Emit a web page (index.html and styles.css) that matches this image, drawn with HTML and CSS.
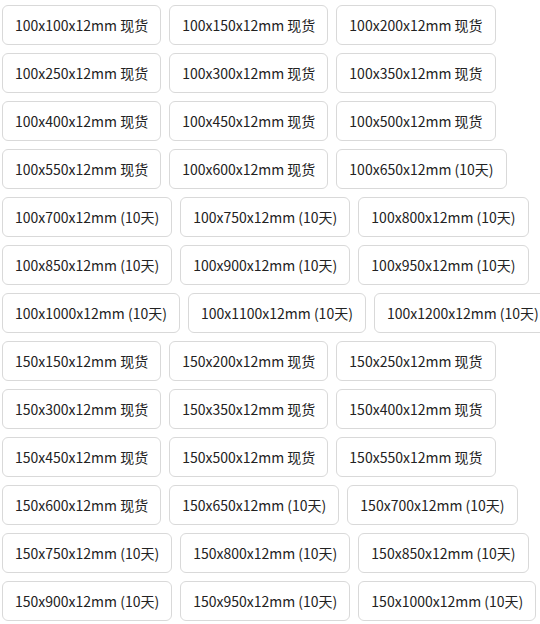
FILE: index.html
```html
<!DOCTYPE html>
<html lang="zh">
<head>
<meta charset="utf-8">
<link rel="stylesheet" href="styles.css">
</head>
<body>
<div class="sizes">
<span class="chip">100x100x12mm 现货</span>
<span class="chip">100x150x12mm 现货</span>
<span class="chip">100x200x12mm 现货</span>
<span class="chip">100x250x12mm 现货</span>
<span class="chip">100x300x12mm 现货</span>
<span class="chip">100x350x12mm 现货</span>
<span class="chip">100x400x12mm 现货</span>
<span class="chip">100x450x12mm 现货</span>
<span class="chip">100x500x12mm 现货</span>
<span class="chip">100x550x12mm 现货</span>
<span class="chip">100x600x12mm 现货</span>
<span class="chip">100x650x12mm (10天)</span>
<span class="chip">100x700x12mm (10天)</span>
<span class="chip">100x750x12mm (10天)</span>
<span class="chip">100x800x12mm (10天)</span>
<span class="chip">100x850x12mm (10天)</span>
<span class="chip">100x900x12mm (10天)</span>
<span class="chip">100x950x12mm (10天)</span>
<span class="chip">100x1000x12mm (10天)</span>
<span class="chip">100x1100x12mm (10天)</span>
<span class="chip">100x1200x12mm (10天)</span>
<span class="chip">150x150x12mm 现货</span>
<span class="chip">150x200x12mm 现货</span>
<span class="chip">150x250x12mm 现货</span>
<span class="chip">150x300x12mm 现货</span>
<span class="chip">150x350x12mm 现货</span>
<span class="chip">150x400x12mm 现货</span>
<span class="chip">150x450x12mm 现货</span>
<span class="chip">150x500x12mm 现货</span>
<span class="chip">150x550x12mm 现货</span>
<span class="chip">150x600x12mm 现货</span>
<span class="chip">150x650x12mm (10天)</span>
<span class="chip">150x700x12mm (10天)</span>
<span class="chip">150x750x12mm (10天)</span>
<span class="chip">150x800x12mm (10天)</span>
<span class="chip">150x850x12mm (10天)</span>
<span class="chip">150x900x12mm (10天)</span>
<span class="chip">150x950x12mm (10天)</span>
<span class="chip">150x1000x12mm (10天)</span>
</div>
</body>
</html>
```
FILE: styles.css
```css
html, body {
  margin: 0;
  padding: 0;
  background: #fff;
  overflow: hidden;
}
body {
  font-family: "Noto Sans CJK SC", "Noto Sans", sans-serif;
  font-size: 14px;
  color: #222;
}
.sizes {
  width: 580px;
  display: flex;
  flex-wrap: wrap;
  gap: 8px 8px;
  padding: 5px 0 0 2px;
}
.chip {
  box-sizing: border-box;
  height: 40px;
  display: flex;
  align-items: center;
  padding: 0 12px;
  border: 1px solid #d9d9d9;
  border-radius: 6px;
  white-space: nowrap;
  line-height: 1;
}
```
